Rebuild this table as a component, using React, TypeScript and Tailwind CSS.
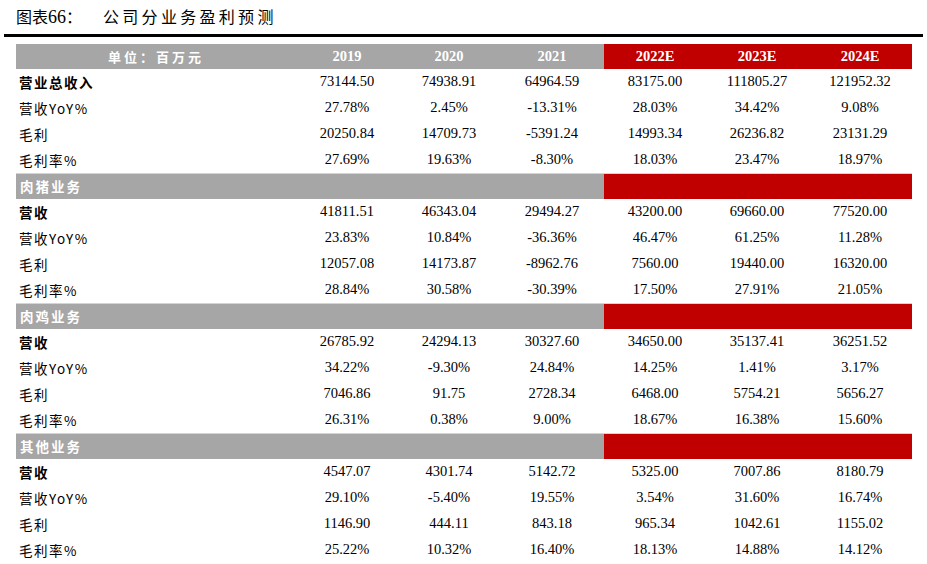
const years = ["2019", "2020", "2021", "2022E", "2023E", "2024E"];
const colW = ["w-[102px]", "w-[102px]", "w-[104px]", "w-[102px]", "w-[102px]", "w-[104px]"];

type Row = { label: string; bold?: boolean; values: string[] };
type Block = { title?: string; rows: Row[] };

const blocks: Block[] = [
  {
    rows: [
      { label: "营业总收入", bold: true, values: ["73144.50", "74938.91", "64964.59", "83175.00", "111805.27", "121952.32"] },
      { label: "营收YoY%", values: ["27.78%", "2.45%", "-13.31%", "28.03%", "34.42%", "9.08%"] },
      { label: "毛利", values: ["20250.84", "14709.73", "-5391.24", "14993.34", "26236.82", "23131.29"] },
      { label: "毛利率%", values: ["27.69%", "19.63%", "-8.30%", "18.03%", "23.47%", "18.97%"] },
    ],
  },
  {
    title: "肉猪业务",
    rows: [
      { label: "营收", bold: true, values: ["41811.51", "46343.04", "29494.27", "43200.00", "69660.00", "77520.00"] },
      { label: "营收YoY%", values: ["23.83%", "10.84%", "-36.36%", "46.47%", "61.25%", "11.28%"] },
      { label: "毛利", values: ["12057.08", "14173.87", "-8962.76", "7560.00", "19440.00", "16320.00"] },
      { label: "毛利率%", values: ["28.84%", "30.58%", "-30.39%", "17.50%", "27.91%", "21.05%"] },
    ],
  },
  {
    title: "肉鸡业务",
    rows: [
      { label: "营收", bold: true, values: ["26785.92", "24294.13", "30327.60", "34650.00", "35137.41", "36251.52"] },
      { label: "营收YoY%", values: ["34.22%", "-9.30%", "24.84%", "14.25%", "1.41%", "3.17%"] },
      { label: "毛利", values: ["7046.86", "91.75", "2728.34", "6468.00", "5754.21", "5656.27"] },
      { label: "毛利率%", values: ["26.31%", "0.38%", "9.00%", "18.67%", "16.38%", "15.60%"] },
    ],
  },
  {
    title: "其他业务",
    rows: [
      { label: "营收", bold: true, values: ["4547.07", "4301.74", "5142.72", "5325.00", "7007.86", "8180.79"] },
      { label: "营收YoY%", values: ["29.10%", "-5.40%", "19.55%", "3.54%", "31.60%", "16.74%"] },
      { label: "毛利", values: ["1146.90", "444.11", "843.18", "965.34", "1042.61", "1155.02"] },
      { label: "毛利率%", values: ["25.22%", "10.32%", "16.40%", "18.13%", "14.88%", "14.12%"] },
    ],
  },
];

const cjk = "font-['Noto_Sans_CJK_SC',sans-serif]";
const num = "font-['Liberation_Serif','Times_New_Roman',serif]";

export default function App() {
  return (
    <div className="w-[927px] h-[564px] bg-white overflow-hidden text-black">
      {/* title */}
      <div className={`flex pl-[16px] pt-[4px] h-[34px] text-[16px] leading-[24px] ${cjk}`}>
        <div className="w-[87px] whitespace-nowrap">
          图表<span className={`${num} text-[18px]`}>66</span>：
        </div>
        <div className="tracking-[3.3px] whitespace-nowrap">公司分业务盈利预测</div>
      </div>
      <div className="ml-[4px] w-[919px] h-[3px] bg-black" />

      <div className="ml-[16px] mt-[7px] w-[896px]">
        {/* header */}
        <div className="flex h-[25px] items-center">
          <div className="flex w-[588px] h-full items-center bg-[#a6a6a6]">
            <div className={`w-[280px] text-center text-white font-bold text-[13px] tracking-[3px] ${cjk}`}>单位：百万元</div>
            {years.slice(0, 3).map((y, i) => (
              <div key={y} className={`${colW[i]} text-center text-white font-bold text-[14.5px] ${num}`}>{y}</div>
            ))}
          </div>
          <div className="flex w-[308px] h-full items-center bg-[#c00000]">
            {years.slice(3).map((y, i) => (
              <div key={y} className={`${colW[i + 3]} text-center text-white font-bold text-[14.5px] ${num}`}>{y}</div>
            ))}
          </div>
        </div>

        {blocks.map((b, bi) => (
          <div key={bi}>
            {b.title && (
              <div className="flex h-[26px] border-t border-[#d4d4d4]">
                <div className={`w-[588px] bg-[#a6a6a6] pl-[4px] flex items-center text-white font-bold text-[13.5px] tracking-[2px] ${cjk}`}>
                  {b.title}
                </div>
                <div className="w-[308px] bg-[#c00000]" />
              </div>
            )}
            {b.rows.map((r) => (
              <div key={r.label} className="flex h-[26px] items-center">
                <div className={`w-[280px] pl-[3px] text-[13.5px] tracking-[1.5px] ${cjk} ${r.bold ? "font-bold" : "font-normal"}`}>
                  {r.label}
                </div>
                {r.values.map((v, i) => (
                  <div key={i} className={`${colW[i]} text-center text-[14.5px] ${num}`}>{v}</div>
                ))}
              </div>
            ))}
          </div>
        ))}
      </div>
    </div>
  );
}
